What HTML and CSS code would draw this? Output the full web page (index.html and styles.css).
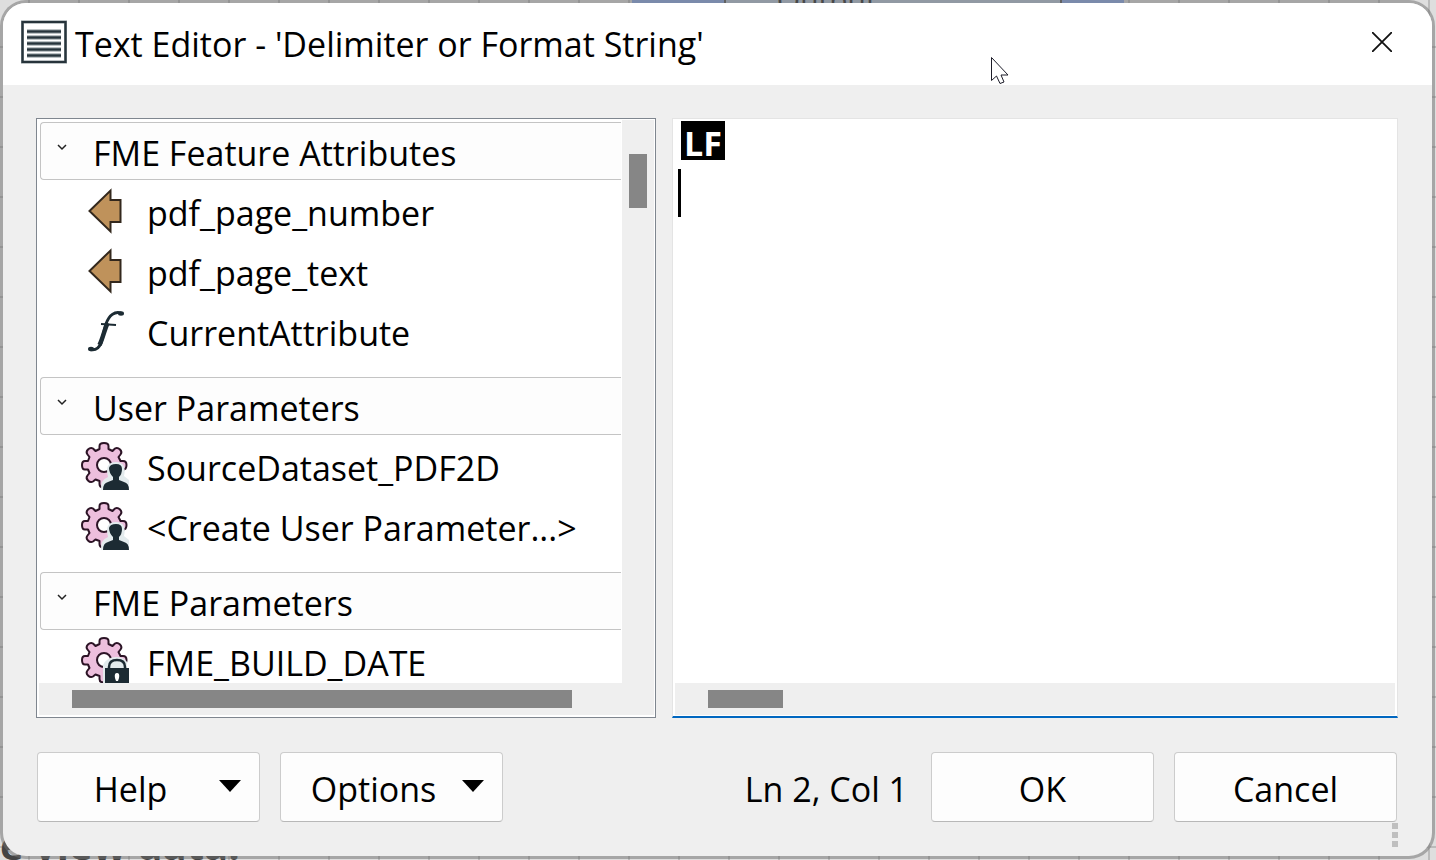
FILE: index.html
```html
<!DOCTYPE html>
<html lang="en">
  <head>
    <meta charset="UTF-8" />
    <meta name="viewport" content="width=device-width, initial-scale=1.0" />
    <title>Text Editor</title>
    <link rel="stylesheet" href="styles.css">
  </head>
  <body>
    <!-- shared icon shapes -->
    <svg class="symbols" aria-hidden="true">
      <symbol id="arrow" viewBox="0 0 48 48">
        <path d="M8.500 24 L29.500 3.500 V13 H39.500 V35 H29.500 V44.500 Z" fill="#bf925b" stroke="#33281d" stroke-width="2" />
      </symbol>
      <symbol id="chevron" viewBox="0 0 10 8">
        <path d="M1 2 L5 6 L9 2" fill="none" stroke="#222" stroke-width="1.500" />
      </symbol>
      <symbol id="gear" viewBox="0 0 48 48">
        <path d="M18.500 7 V4 Q18.500 1 23 1 Q27.500 1 27.500 4 V7 L31.500 9 L34 6.500 Q36.500 5 39 7.500 Q41.500 10 39.500 12.500 L37.500 15 L39.500 19 H42 Q45.500 19 45.500 23 Q45.500 27.500 42 27.500 H39.500 L37.500 31 L39.500 33.500 Q41.500 36 39 38.500 Q36.500 41 34 39.500 L31.500 37.500 L27.500 39 V42 Q27.500 45.500 23 45.500 Q18.500 45.500 18.500 42 V39 L14.500 37.500 L12 39.500 Q9.500 41 7 38.500 Q4.500 36 6.500 33.500 L8.500 31 L7 27.500 H4 Q1 27.500 1 23 Q1 19 4 19 H7 L8.500 15 L6.500 12.500 Q4.500 10 7 7.500 Q9.500 5 12 6.500 L14.500 9 Z" fill="#edbfdd" stroke="#2c1426" stroke-width="2" stroke-linejoin="round" />
        <circle cx="23" cy="23" r="7" fill="#fff" stroke="#2c1426" stroke-width="2" />
      </symbol>
      <symbol id="user" viewBox="0 0 48 48">
        <path d="M20 48 Q19 38 27 35 Q23 20 35 20 Q46 20 43 34 L48 38 V48 Z" fill="#e3ebed" />
        <path d="M22 48 Q22 41 27 40 L32 38 V35 Q28 31 28 26 Q29 22 35 22 Q41 22 41 27 Q41 32 38 35 V38 L43 40 Q48 41 48 48 Z" fill="#1c2b33" />
      </symbol>
      <symbol id="lock" viewBox="0 0 48 48">
        <path d="M22 48 V28 Q26 20 35 20 Q43 20 46 25 V48 Z" fill="#e3ebed" />
        <path d="M28 33 V30 Q28 23 36 23 Q44 23 44 30 V33" fill="none" stroke="#1c2b33" stroke-width="2.500" />
        <rect x="24" y="31" width="24" height="20" fill="#1c2b33" />
        <path d="M34 41 Q33 36 36 36 Q39 36 38 41 L37 44 H35 Z" fill="#fff" />
      </symbol>
    </svg>

    <!-- workspace canvas behind the dialog -->
    <div class="node">Output</div>
    <div class="note">e view data.</div>

    <main class="dialog">
      <header class="title-bar">
        <svg class="app-icon" viewBox="0 0 46 44">
          <rect x="1.500" y="2" width="43" height="40" fill="#fff" stroke="#7d878c" stroke-width="3" />
          <rect x="1.500" y="2" width="43" height="40" fill="none" stroke="#27343b" stroke-width="2" />
          <path d="M6 11.500 H40 M6 17.500 H40 M6 23.500 H40 M6 29.500 H40 M6 35.500 H40" stroke="#7d878c" stroke-width="4" />
          <path d="M6 11.500 H40 M6 17.500 H40 M6 23.500 H40 M6 29.500 H40 M6 35.500 H40" stroke="#27343b" stroke-width="2" />
        </svg>
        <h1>Text Editor - 'Delimiter or Format String'</h1>
        <button class="close-btn" aria-label="Close">
          <svg viewBox="0 0 20 20"><path d="M0 0 L20 20 M20 0 L0 20" stroke="#111" stroke-width="1.800" /></svg>
        </button>
      </header>

      <div class="content">
        <div class="panels">
          <section class="panel tree-panel">
            <div class="tree">
              <div class="group">
                <h2><svg class="chevron"><use href="#chevron" /></svg>FME Feature Attributes</h2>
                <ul>
                  <li><svg class="icon"><use href="#arrow" /></svg>pdf_page_number</li>
                  <li><svg class="icon"><use href="#arrow" /></svg>pdf_page_text</li>
                  <li>
                    <svg class="icon" viewBox="0 0 48 48">
                      <path d="M9 42.500 C15 44 18 41 20 36 L25 17 C28 8 34 4 40 6" fill="none" stroke="#1c2b33" stroke-width="3" />
                      <path d="M18.500 38 C22 31 23 24 26.500 16" fill="none" stroke="#1c2b33" stroke-width="4.500" />
                      <ellipse cx="10" cy="42" rx="3" ry="2.200" fill="#1c2b33" />
                      <ellipse cx="40" cy="6.500" rx="3" ry="2.200" fill="#1c2b33" />
                      <path d="M20 17 L35 18" stroke="#1c2b33" stroke-width="2" />
                    </svg>CurrentAttribute
                  </li>
                </ul>
              </div>
              <div class="group">
                <h2><svg class="chevron"><use href="#chevron" /></svg>User Parameters</h2>
                <ul>
                  <li><svg class="icon"><use href="#gear" /><use href="#user" /></svg>SourceDataset_PDF2D</li>
                  <li><svg class="icon"><use href="#gear" /><use href="#user" /></svg>&lt;Create User Parameter...&gt;</li>
                </ul>
              </div>
              <div class="group">
                <h2><svg class="chevron"><use href="#chevron" /></svg>FME Parameters</h2>
                <ul>
                  <li><svg class="icon"><use href="#gear" /><use href="#lock" /></svg>FME_BUILD_DATE</li>
                </ul>
              </div>
            </div>
            <div class="v-scroll"><div class="thumb"></div></div>
            <div class="h-scroll"><div class="thumb"></div></div>
          </section>

          <section class="panel editor-panel">
            <div class="editor">
              <span class="line-feed">LF</span>
              <textarea aria-label="Text" spellcheck="false"></textarea>
              <span class="caret"></span>
            </div>
            <div class="h-scroll"><div class="thumb"></div></div>
          </section>
        </div>

        <footer class="actions">
          <button class="btn menu-btn"><span>Help</span><svg viewBox="0 0 22 12"><path d="M0 0 H22 L11 12 Z" /></svg></button>
          <button class="btn menu-btn"><span>Options</span><svg viewBox="0 0 22 12"><path d="M0 0 H22 L11 12 Z" /></svg></button>
          <span class="status">Ln 2, Col 1</span>
          <button class="btn">OK</button>
          <button class="btn">Cancel</button>
        </footer>
      </div>
      <div class="grip"><i></i><i></i><i></i></div>
    </main>

    <svg class="pointer" viewBox="0 0 18 28">
      <path d="M0.500 0.500 V23.500 L5.500 19 L9 26.500 L13 25 L10 18 H17 Z" fill="#fff" stroke="#1c1c28" />
    </svg>
  </body>
</html>
```
FILE: styles.css
```css
* {
  box-sizing: border-box;
}

body {
  display: flex;
  height: 100vh;
  margin: 0;
  padding: 0 1px 1px 0;
  overflow: hidden;
  font-family: "Open Sans", "Noto Sans", sans-serif;
  font-size: 34px;
  color: #000;
  background-color: #dedede;
  background-image: linear-gradient(90deg, #bbb 2px, transparent 2px),
    linear-gradient(#bbb 2px, transparent 2px);
  background-size: 50px 50px;
  background-position: 28px 46px;
}

.symbols {
  position: absolute;
  width: 0;
  height: 0;
}

.node {
  position: absolute;
  top: -20px;
  left: 44%;
  width: 492px;
  padding-left: 145px;
  font-size: 30px;
  line-height: 40px;
  color: #222;
  background: linear-gradient(90deg, #86a6e8 92px, #555 92px, #555 94px, #b4c4d8 94px, #b4c4d8 428px, #555 428px, #555 430px, #86a6e8 430px);
}

.note {
  position: absolute;
  bottom: -12px;
  left: 0;
  font-size: 40px;
  font-weight: bold;
  line-height: 54px;
  color: #444;
}

.dialog {
  position: relative;
  display: flex;
  flex: 1;
  flex-direction: column;
  border: 3px solid rgba(110, 110, 110, 0.5);
  border-radius: 26px;
  background: #efefef;
  background-clip: padding-box;
}

.title-bar {
  display: flex;
  align-items: center;
  height: 82px;
  padding: 0 40px 4px 18px;
  background: #fff;
  border-radius: 23px 23px 0 0;
}

.app-icon {
  width: 46px;
  height: 44px;
}

h1 {
  flex: 1;
  margin: 4px 0 0 8px;
  font-size: 34px;
  font-weight: normal;
}

.close-btn {
  display: flex;
  padding: 0;
  border: none;
  background: none;
}

.close-btn svg {
  width: 20px;
  height: 20px;
}

.content {
  display: flex;
  flex: 1;
  flex-direction: column;
  min-height: 0;
  padding: 33px 34px 34px 33px;
}

.panels {
  display: grid;
  flex: 1;
  grid-template-columns: 620fr 726fr;
  gap: 16px;
  min-height: 0;
}

.panel {
  display: grid;
  min-height: 0;
  background: #fff;
}

.tree-panel {
  grid-template: minmax(0, 1fr) 32px / minmax(0, 1fr) 32px;
  padding: 1px 1px 2px 2px;
  border: 1px solid #7f868f;
}

.tree {
  padding: 0 1px;
  overflow: hidden;
}

.group {
  padding-bottom: 15px;
}

h2 {
  display: flex;
  align-items: center;
  height: 58px;
  margin: 2px 0 0;
  padding: 4px 0 0 16px;
  font-size: 34px;
  font-weight: normal;
  white-space: nowrap;
  background: #fdfdfd;
  border: 1px solid #c4c4c4;
  border-right: none;
  border-radius: 4px 0 0 4px;
}

.chevron {
  flex: none;
  width: 10px;
  height: 8px;
  margin: 0 26px 12px 0;
}

ul {
  margin: 0;
  padding: 0;
  list-style: none;
}

li {
  display: flex;
  align-items: center;
  height: 60px;
  padding: 6px 0 0 41px;
  white-space: nowrap;
}

.icon {
  flex: none;
  width: 48px;
  height: 48px;
  margin: 0 18px 4px 0;
}

.v-scroll,
.h-scroll {
  background: #efefef;
}

.v-scroll {
  padding: 34px 7px 0;
}

.h-scroll {
  padding: 7px 33px 0;
}

.thumb {
  height: 18px;
  background: #868686;
}

.v-scroll .thumb {
  height: 54px;
}

.tree-panel .h-scroll {
  grid-column: 1 / -1;
}

.tree-panel .h-scroll .thumb {
  width: 91%;
}

.editor-panel {
  grid-template-rows: minmax(0, 1fr) 32px;
  padding: 1px 2px;
  border: 1px solid #e4e4e4;
  border-bottom: 2px solid #0067c0;
}

.editor-panel .h-scroll .thumb {
  width: 75px;
}

.editor {
  position: relative;
  display: flex;
  flex-direction: column;
  align-items: flex-start;
  padding: 1px 0 0 6px;
}

.line-feed {
  height: 39px;
  padding: 0 3px;
  font-weight: bold;
  line-height: 45px;
  color: #fff;
  background: #000;
}

.editor textarea {
  flex: 1;
  width: 100%;
  margin-top: 8px;
  padding: 0;
  font: inherit;
  border: none;
  outline: none;
  resize: none;
}

.caret {
  position: absolute;
  top: 49px;
  left: 3px;
  width: 3px;
  height: 48px;
  background: #000;
}

.actions {
  display: flex;
  align-items: center;
  gap: 20px;
  padding: 34px 1px 0;
}

.btn {
  width: 223px;
  height: 70px;
  padding: 4px 0 0;
  font: inherit;
  color: #000;
  background: #fdfdfd;
  border: 1px solid #ccc;
  border-bottom-color: #b8b8b8;
  border-radius: 4px;
}

.menu-btn {
  display: flex;
  align-items: center;
  padding: 4px 18px 0 4px;
}

.menu-btn span {
  flex: 1;
}

.menu-btn svg {
  width: 22px;
  height: 12px;
  margin-bottom: 6px;
}

.status {
  margin-left: auto;
  padding: 4px 3px 0 0;
}

.grip {
  position: absolute;
  right: 34px;
  bottom: 9px;
  display: grid;
  gap: 3px;
}

.grip i {
  width: 6px;
  height: 6px;
  background: #bfbfbf;
}

.pointer {
  position: absolute;
  top: 57px;
  left: 991px;
  width: 18px;
  height: 28px;
}
```
